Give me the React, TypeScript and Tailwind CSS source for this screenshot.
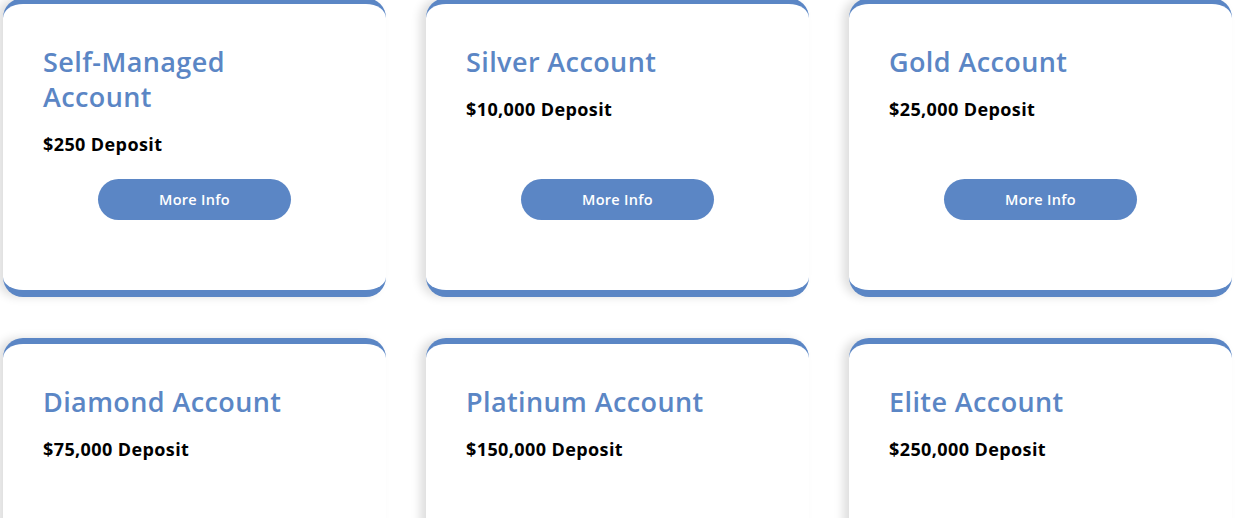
import React from 'react';

const accounts = [
  { name: 'Self-Managed Account', deposit: '$250 Deposit' },
  { name: 'Silver Account', deposit: '$10,000 Deposit' },
  { name: 'Gold Account', deposit: '$25,000 Deposit' },
  { name: 'Diamond Account', deposit: '$75,000 Deposit' },
  { name: 'Platinum Account', deposit: '$150,000 Deposit' },
  { name: 'Elite Account', deposit: '$250,000 Deposit' },
];

function AccountCard({ name, deposit }: { name: string; deposit: string }) {
  return (
    <div className="h-[299px] bg-white rounded-[20px] border-t-[6px] border-b-[7px] border-[#5b86c5] shadow-[-6px_0_10px_rgba(0,0,0,0.13)] px-[40px] pt-[40px] flex flex-col">
      <div className="min-h-[135px]">
        <h3 className="max-w-[280px] text-[27px] leading-[35px] tracking-[0.4px] font-semibold text-[#5b86c5] mb-[17px]">{name}</h3>
        <p className="text-[18px] leading-[26px] tracking-[0.4px] font-bold text-black">{deposit}</p>
      </div>
      <button className="mx-auto w-[193px] h-[41px] rounded-full bg-[#5b86c5] text-white text-[14.5px] tracking-[0.3px] font-semibold">
        More Info
      </button>
    </div>
  );
}

export default function App() {
  return (
    <div className="h-[518px] bg-white overflow-hidden font-['Open_Sans',sans-serif]">
      <div className="-mt-[2px] pl-[3px] grid grid-cols-[repeat(3,383px)] gap-x-[40px] gap-y-[41px]">
        {accounts.map((a) => (
          <AccountCard key={a.name} name={a.name} deposit={a.deposit} />
        ))}
      </div>
    </div>
  );
}
